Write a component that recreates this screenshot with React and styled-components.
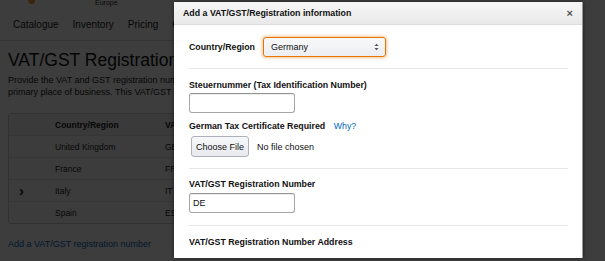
import React from "react";
import styled, { createGlobalStyle } from "styled-components";

const GlobalStyle = createGlobalStyle`
  html, body {
    margin: 0;
    padding: 0;
    background: #404040;
  }
  body {
    font-family: "Liberation Sans", Arial, sans-serif;
  }
`;

const rows = [
  { name: "United Kingdom", number: "GB" },
  { name: "France", number: "FR" },
  { name: "Italy", number: "IT", open: true },
  { name: "Spain", number: "ES" },
];

const App = () => {
  return (
    <>
      <GlobalStyle />
      <Screen>
        <Page>
          <TopStrip>
            <LogoDot />
            <Region>Europe</Region>
          </TopStrip>
          <Nav>
            <NavItem>Catalogue</NavItem>
            <NavItem>Inventory</NavItem>
            <NavItem>Pricing</NavItem>
            <NavItem>Orders</NavItem>
          </Nav>
          <Content>
            <Heading>VAT/GST Registration numbers</Heading>
            <Intro>
              Provide the VAT and GST registration numbers for the countries in
              which you are registered, including your
              <br />
              primary place of business. This VAT/GST registration number will be
              used for invoicing.
            </Intro>
            <Table>
              <HeadRow>
                <Chevron />
                <NameCell>Country/Region</NameCell>
                <NumberCell>VAT/GST Number</NumberCell>
              </HeadRow>
              {rows.map(r => (
                <Row key={r.name}>
                  <Chevron>{r.open ? "›" : ""}</Chevron>
                  <NameCell>{r.name}</NameCell>
                  <NumberCell>{r.number}</NumberCell>
                </Row>
              ))}
            </Table>
            <AddLink>Add a VAT/GST registration number</AddLink>
          </Content>
        </Page>
        <Overlay />
        <Modal>
          <ModalHeader>
            <ModalTitle>Add a VAT/GST/Registration information</ModalTitle>
            <Close>×</Close>
          </ModalHeader>
          <ModalBody>
            <Section $top={12} $bottom={11}>
              <InlineRow>
                <Label>Country/Region</Label>
                <Select>
                  <span>Germany</span>
                  <Arrows>
                    <svg width="5" height="8" viewBox="0 0 5 8">
                      <path d="M0.5 3L2.5 0.8L4.5 3Z" fill="#555" />
                      <path d="M0.5 5L2.5 7.2L4.5 5Z" fill="#555" />
                    </svg>
                  </Arrows>
                </Select>
              </InlineRow>
            </Section>
            <Section $top={10} $bottom={11}>
              <Label>Steuernummer (Tax Identification Number)</Label>
              <TextBox />
              <Label $gap={7}>
                German Tax Certificate Required <Why>Why?</Why>
              </Label>
              <FileRow>
                <FileButton>Choose File</FileButton>
                <FileName>No file chosen</FileName>
              </FileRow>
            </Section>
            <Section $top={9} $bottom={12}>
              <Label>VAT/GST Registration Number</Label>
              <TextBox $gap={3}>DE</TextBox>
            </Section>
            <Section $top={10} $bottom={10}>
              <Label>VAT/GST Registration Number Address</Label>
            </Section>
          </ModalBody>
        </Modal>
      </Screen>
    </>
  );
};

export default App;

const Screen = styled.div`
  position: relative;
  width: 605px;
  height: 261px;
  overflow: hidden;
  background: #fff;
`;

const Page = styled.div`
  width: 176px;
  height: 261px;
  overflow: hidden;
  display: flex;
  flex-direction: column;
  color: #111;
`;

const TopStrip = styled.div`
  height: 8px;
  flex: none;
  display: flex;
  align-items: flex-end;
  gap: 60px;
  padding-left: 28px;
  overflow: hidden;
`;

const LogoDot = styled.div`
  width: 7px;
  height: 4px;
  margin-bottom: 4px;
  border-radius: 0 0 4px 4px;
  background: #e8a23a;
`;

const Region = styled.div`
  font-size: 7px;
  line-height: 7px;
  margin-bottom: 2px;
  color: #333;
`;

const Nav = styled.div`
  height: 32px;
  flex: none;
  display: flex;
  align-items: center;
  gap: 14px;
  padding-left: 13px;
  border-bottom: 1px solid #ddd;
`;

const NavItem = styled.div`
  font-size: 10px;
  color: #222;
  white-space: nowrap;
`;

const Content = styled.div`
  padding: 8px 0 0 8px;
  display: flex;
  flex-direction: column;
`;

const Heading = styled.h1`
  margin: 0;
  font-size: 17.5px;
  line-height: 22px;
  font-weight: 400;
  white-space: nowrap;
`;

const Intro = styled.p`
  margin: 3px 0 0;
  font-size: 9px;
  line-height: 12px;
  color: #222;
  white-space: nowrap;
`;

const Table = styled.div`
  margin-top: 15px;
  width: 420px;
  border: 1px solid #ccc;
  border-radius: 3px;
  background: #fafafa;
`;

const Row = styled.div`
  height: 21px;
  display: grid;
  grid-template-columns: 46px 108px 1fr;
  align-items: center;
  font-size: 8.5px;
  color: #222;
  border-top: 1px solid #e3e3e3;
`;

const HeadRow = styled(Row)`
  border-top: none;
  background: #f0f0f0;
  font-weight: 700;
`;

const Chevron = styled.div`
  padding-left: 10px;
  font-size: 15px;
  line-height: 10px;
  font-weight: 700;
`;

const NameCell = styled.div`
  white-space: nowrap;
`;

const NumberCell = styled.div`
  padding-left: 2px;
  white-space: nowrap;
`;

const AddLink = styled.div`
  margin-top: 14px;
  font-size: 9px;
  line-height: 12px;
  color: #0066c0;
  white-space: nowrap;
`;

const Overlay = styled.div`
  position: absolute;
  inset: 0;
  background: rgba(0, 0, 0, 0.76);
`;

const Modal = styled.div`
  position: absolute;
  left: 174px;
  top: 2px;
  width: 408px;
  height: 256px;
  background: #fff;
  border-right: 1px solid #999;
  box-shadow: 0 0 4px rgba(0, 0, 0, 0.5);
  display: flex;
  flex-direction: column;
  overflow: hidden;
`;

const ModalHeader = styled.div`
  height: 22px;
  flex: none;
  display: flex;
  align-items: center;
  justify-content: space-between;
  padding: 0 9px 0 9px;
  background: linear-gradient(#f6f6f6, #e9e9e9);
  border-bottom: 1px solid #dcdcdc;
`;

const ModalTitle = styled.div`
  font-size: 8.8px;
  font-weight: 700;
  color: #111;
`;

const Close = styled.div`
  font-size: 11px;
  font-weight: 700;
  color: #555;
  line-height: 10px;
`;

const ModalBody = styled.div`
  padding: 0 14px 0 15px;
  display: flex;
  flex-direction: column;
`;

const Section = styled.div`
  display: flex;
  flex-direction: column;
  align-items: flex-start;
  padding: ${p => p.$top}px 0 ${p => p.$bottom}px;
  border-bottom: 1px solid #e7e7e7;

  &:last-child {
    border-bottom: none;
  }
`;

const InlineRow = styled.div`
  display: flex;
  align-items: center;
  gap: 8px;
`;

const Label = styled.div`
  margin-top: ${p => p.$gap || 0}px;
  font-size: 8.8px;
  line-height: 12px;
  font-weight: 700;
  color: #111;
  white-space: nowrap;
`;

const Why = styled.span`
  margin-left: 6px;
  color: #0066c0;
  font-weight: 400;
`;

const Select = styled.div`
  width: 108px;
  height: 18px;
  box-sizing: content-box;
  display: flex;
  align-items: center;
  justify-content: space-between;
  padding: 0 6px 0 7px;
  border: 1px solid #e77600;
  border-radius: 3px;
  background: linear-gradient(#f7f8fa, #eceef1);
  box-shadow: 0 0 3px 1px rgba(228, 121, 17, 0.45);
  font-size: 9px;
  color: #111;
`;

const Arrows = styled.div`
  display: flex;
  align-items: center;
`;

const TextBox = styled.div`
  margin-top: ${p => p.$gap || 2}px;
  width: 98px;
  height: 18px;
  box-sizing: content-box;
  padding: 0 3px;
  display: flex;
  align-items: center;
  border: 1px solid #a6a6a6;
  border-top-color: #949494;
  border-radius: 3px;
  box-shadow: inset 0 1px 0 rgba(0, 0, 0, 0.07);
  font-size: 9px;
  color: #111;
`;

const FileRow = styled.div`
  margin-top: 4px;
  margin-left: 2px;
  display: flex;
  align-items: center;
  gap: 8px;
`;

const FileButton = styled.div`
  width: 56px;
  height: 19px;
  display: flex;
  align-items: center;
  justify-content: center;
  border: 1px solid #adb1b8;
  border-radius: 3px;
  background: linear-gradient(#f7f8fa, #e7e9ec);
  font-size: 9px;
  color: #111;
`;

const FileName = styled.div`
  font-size: 9px;
  color: #111;
`;
